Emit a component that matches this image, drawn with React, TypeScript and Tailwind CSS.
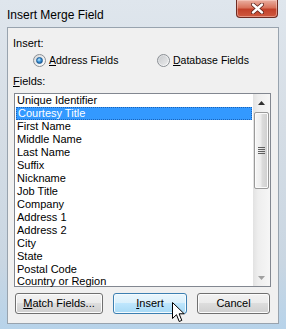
import React from "react";

const items = [
  "Unique Identifier",
  "Courtesy Title",
  "First Name",
  "Middle Name",
  "Last Name",
  "Suffix",
  "Nickname",
  "Job Title",
  "Company",
  "Address 1",
  "Address 2",
  "City",
  "State",
  "Postal Code",
  "Country or Region",
];

function Radio({ checked }: { checked: boolean }) {
  return (
    <div className="w-[13px] h-[13px] rounded-full border border-[#8a8f94] bg-[linear-gradient(135deg,#d4d6d8_0%,#f0f1f2_60%,#ffffff_100%)] flex items-center justify-center shrink-0">
      {checked ? (
        <div className="w-[7px] h-[7px] rounded-full bg-[radial-gradient(circle_at_40%_35%,#c4ecff_0%,#3d95d8_45%,#0d4a88_100%)] border border-[#1b5a94]" />
      ) : (
        <div className="w-[9px] h-[9px] rounded-full bg-[linear-gradient(135deg,#c9cbce_0%,#e9eaeb_100%)]" />
      )}
    </div>
  );
}

export default function App() {
  return (
    <div className="relative w-[286px] h-[329px] overflow-hidden flex flex-col bg-[linear-gradient(180deg,#dfe6ed_0%,#d5dde5_40%,#c9d6e2_80%,#b7d3ea_100%)] font-['Liberation_Sans',Arial,sans-serif] text-black">
      {/* Title bar */}
      <div className="h-[27px] shrink-0 flex items-center pl-[7px] pt-[2px] text-[12px]">
        Insert Merge Field
      </div>
      {/* Close button */}
      <div className="absolute top-0 left-[236px] w-[42px] h-[18px] rounded-b-[4px] border border-t-0 border-[#6e2b22] bg-[linear-gradient(180deg,#eab0a2_0%,#d9735c_45%,#c2412a_55%,#cf5a40_100%)] shadow-[inset_0_0_0_1px_rgba(255,220,210,0.45)] flex items-center justify-center">
        <svg width="13" height="11" viewBox="0 0 13 11">
          <path
            d="M2 1.5 L11 9.5 M11 1.5 L2 9.5"
            stroke="#5a2018"
            strokeWidth="4"
            strokeLinecap="round"
          />
          <path
            d="M2 1.5 L11 9.5 M11 1.5 L2 9.5"
            stroke="#ffffff"
            strokeWidth="2.4"
            strokeLinecap="round"
          />
        </svg>
      </div>

      {/* Client panel */}
      <div className="mx-[7px] h-[297px] shrink-0 border border-[#98a3ae] bg-[#f0f0f0] flex flex-col pl-[5px] text-[11px]">
        <div className="mt-[8px] h-[14px] leading-[14px]">Insert:</div>
        <div className="mt-[2px] h-[16px] flex items-center pl-[20px] text-[10.5px]">
          <div className="w-[124px] flex items-center gap-[3px]">
            <Radio checked />
            <span className="leading-[14px]">
              <span className="underline underline-offset-[1px]">A</span>ddress Fields
            </span>
          </div>
          <div className="flex items-center gap-[3px]">
            <Radio checked={false} />
            <span className="leading-[14px]">
              <span className="underline underline-offset-[1px]">D</span>atabase Fields
            </span>
          </div>
        </div>
        <div className="mt-[6px] h-[14px] leading-[14px]">
          <span className="underline underline-offset-[1px]">F</span>ields:
        </div>

        {/* Listbox */}
        <div className="mt-[5px] ml-[1px] w-[257px] h-[194px] border border-[#828790] bg-white flex">
          <div className="flex-1 flex flex-col">
            {items.map((it, i) =>
              i === 1 ? (
                <div
                  key={it}
                  className="h-[13px] leading-[11px] mx-[1px] pl-[1px] shrink-0 bg-[#3399ff] text-white border border-dotted border-[#1c63b8]"
                >
                  {it}
                </div>
              ) : i === items.length - 1 ? (
                <div key={it} className="h-[10px] leading-[11px] pl-[2px] shrink-0">
                  {it}
                </div>
              ) : (
                <div key={it} className="h-[13px] leading-[13px] pl-[2px] shrink-0">
                  {it}
                </div>
              )
            )}
          </div>
          {/* Scrollbar */}
          <div className="w-[17px] shrink-0 flex flex-col bg-[linear-gradient(90deg,#e2e2e2_0%,#eeeeee_30%,#f6f6f6_100%)]">
            <div className="h-[17px] flex items-center justify-center">
              <svg width="7" height="4" viewBox="0 0 7 4">
                <path d="M3.5 0 L7 4 L0 4 Z" fill="#303030" />
              </svg>
            </div>
            <div className="flex-1 flex flex-col">
              <div className="mt-[1px] mx-[1px] h-[77px] rounded-[2px] border border-[#9a9a9a] bg-[linear-gradient(90deg,#f6f6f6_0%,#ececec_45%,#dcdcdc_55%,#cfcfcf_100%)] shadow-[inset_0_0_0_1px_#fbfbfb] flex flex-col items-center justify-center gap-[1px]">
                <div className="w-[7px] h-[1px] bg-[#5f5f5f]" />
                <div className="w-[7px] h-[1px] bg-[#5f5f5f]" />
                <div className="w-[7px] h-[1px] bg-[#5f5f5f]" />
                <div className="w-[7px] h-[1px] bg-[#5f5f5f]" />
              </div>
            </div>
            <div className="h-[17px] flex items-center justify-center">
              <svg width="7" height="4" viewBox="0 0 7 4">
                <path d="M0 0 L7 0 L3.5 4 Z" fill="#a0a0a0" />
              </svg>
            </div>
          </div>
        </div>

        {/* Buttons */}
        <div className="mt-[6px] h-[21px] flex pl-[2px] gap-[10px]">
          <div className="w-[88px] h-[21px] rounded-[3px] border border-[#707070] bg-[linear-gradient(180deg,#f2f2f2_0%,#ebebeb_50%,#dddddd_50%,#cfcfcf_100%)] shadow-[inset_0_0_0_1px_#fcfcfc] flex items-center justify-center">
            <span>
              <span className="underline underline-offset-[1px]">M</span>atch Fields...
            </span>
          </div>
          <div className="w-[74px] h-[21px] rounded-[3px] border border-[#3c7fb1] bg-[linear-gradient(180deg,#eaf6fd_0%,#d9f0fc_50%,#bee6fd_50%,#a7d9f5_100%)] shadow-[inset_0_0_0_1px_#f4fbfe] flex items-center justify-center">
            <span>
              <span className="underline underline-offset-[1px]">I</span>nsert
            </span>
          </div>
          <div className="w-[73px] h-[21px] rounded-[3px] border border-[#707070] bg-[linear-gradient(180deg,#f2f2f2_0%,#ebebeb_50%,#dddddd_50%,#cfcfcf_100%)] shadow-[inset_0_0_0_1px_#fcfcfc] flex items-center justify-center">
            Cancel
          </div>
        </div>
      </div>

      {/* Mouse cursor */}
      <svg
        className="absolute left-[172px] top-[302px]"
        width="13"
        height="21"
        viewBox="0 0 13 21"
      >
        <path
          d="M0.5 0.5 L0.5 16.5 L4.5 12.7 L7.2 19.5 L9.8 18.4 L7.1 11.8 L12.2 11.8 Z"
          fill="#ffffff"
          stroke="#000000"
          strokeWidth="1"
          strokeLinejoin="miter"
        />
      </svg>
    </div>
  );
}
